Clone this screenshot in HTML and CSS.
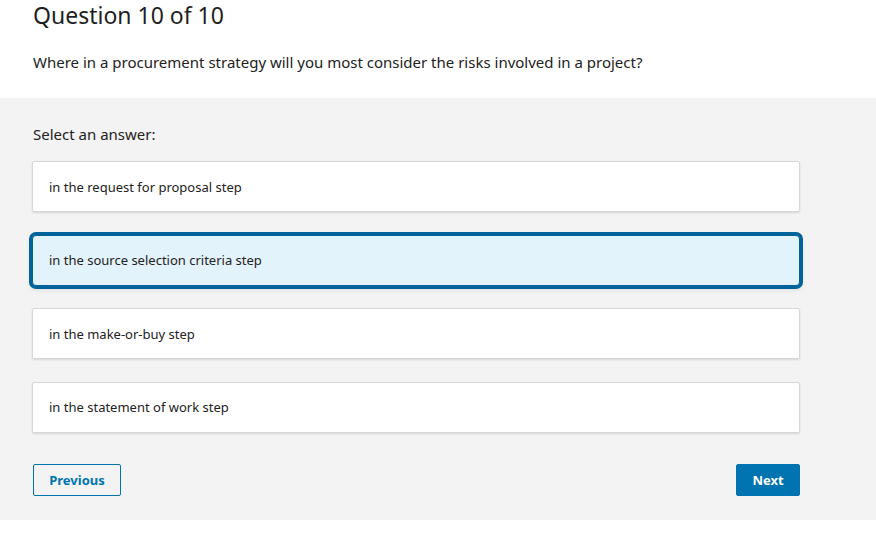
FILE: index.html
```html
<!DOCTYPE html>
<html>
<head>
<meta charset="utf-8">
<link rel="stylesheet" href="styles.css">
</head>
<body>
<div class="header">
  <h1 class="title">Question 10 of 10</h1>
  <p class="question">Where in a procurement strategy will you most consider the risks involved in a project?</p>
</div>
<div class="panel">
  <p class="prompt">Select an answer:</p>
  <div class="options">
    <div class="option">in the request for proposal step</div>
    <div class="option selected">in the source selection criteria step</div>
    <div class="option">in the make-or-buy step</div>
    <div class="option">in the statement of work step</div>
  </div>
  <div class="nav">
    <button class="btn btn-prev">Previous</button>
    <button class="btn btn-next">Next</button>
  </div>
</div>
</body>
</html>
```
FILE: styles.css
```css
html, body {
  margin: 0;
  padding: 0;
  background: #ffffff;
  font-family: "Noto Sans", "Open Sans", sans-serif;
  color: #222222;
}
.header {
  padding: 0 33px;
  height: 98px;
  box-sizing: border-box;
}
.title {
  margin: 0;
  font-weight: 400;
  font-size: 23px;
  line-height: 31px;
  color: #1f1f1f;
}
.question {
  margin: 20px 0 0;
  font-size: 15px;
  line-height: 22px;
  color: #222;
}
.panel {
  background: #f3f3f3;
  padding: 24px 76px 24px 32px;
  height: 422px;
  box-sizing: border-box;
}
.prompt {
  margin: 0 0 0 1px;
  font-size: 15px;
  line-height: 24px;
  color: #222;
}
.options {
  margin-top: 15px;
  display: flex;
  flex-direction: column;
  gap: 22.5px;
}
.option {
  height: 51px;
  box-sizing: border-box;
  background: #fff;
  border: 1px solid #d6d6d6;
  border-radius: 2px;
  box-shadow: 0 1px 2px rgba(0,0,0,0.12);
  display: flex;
  align-items: center;
  padding-left: 16px;
  font-size: 13px;
  color: #222;
}
.option.selected {
  background: #e2f3fb;
  border-color: #00639b;
  box-shadow: 0 0 0 3px #00639b, 0 3px 6px rgba(0,0,0,0.12);
  border-radius: 4px;
}
.nav {
  margin-top: 31.5px;
  display: flex;
  justify-content: space-between;
  padding-left: 1px;
}
.btn {
  height: 32px;
  box-sizing: border-box;
  font-family: "Noto Sans", "Open Sans", sans-serif;
  font-weight: 700;
  font-size: 13px;
  border-radius: 2px;
  cursor: pointer;
}
.btn-prev {
  width: 88px;
  background: transparent;
  border: 1px solid #0073b1;
  color: #0073b1;
}
.btn-next {
  width: 64px;
  background: #0073b1;
  border: 1px solid #0073b1;
  color: #fff;
}
```
